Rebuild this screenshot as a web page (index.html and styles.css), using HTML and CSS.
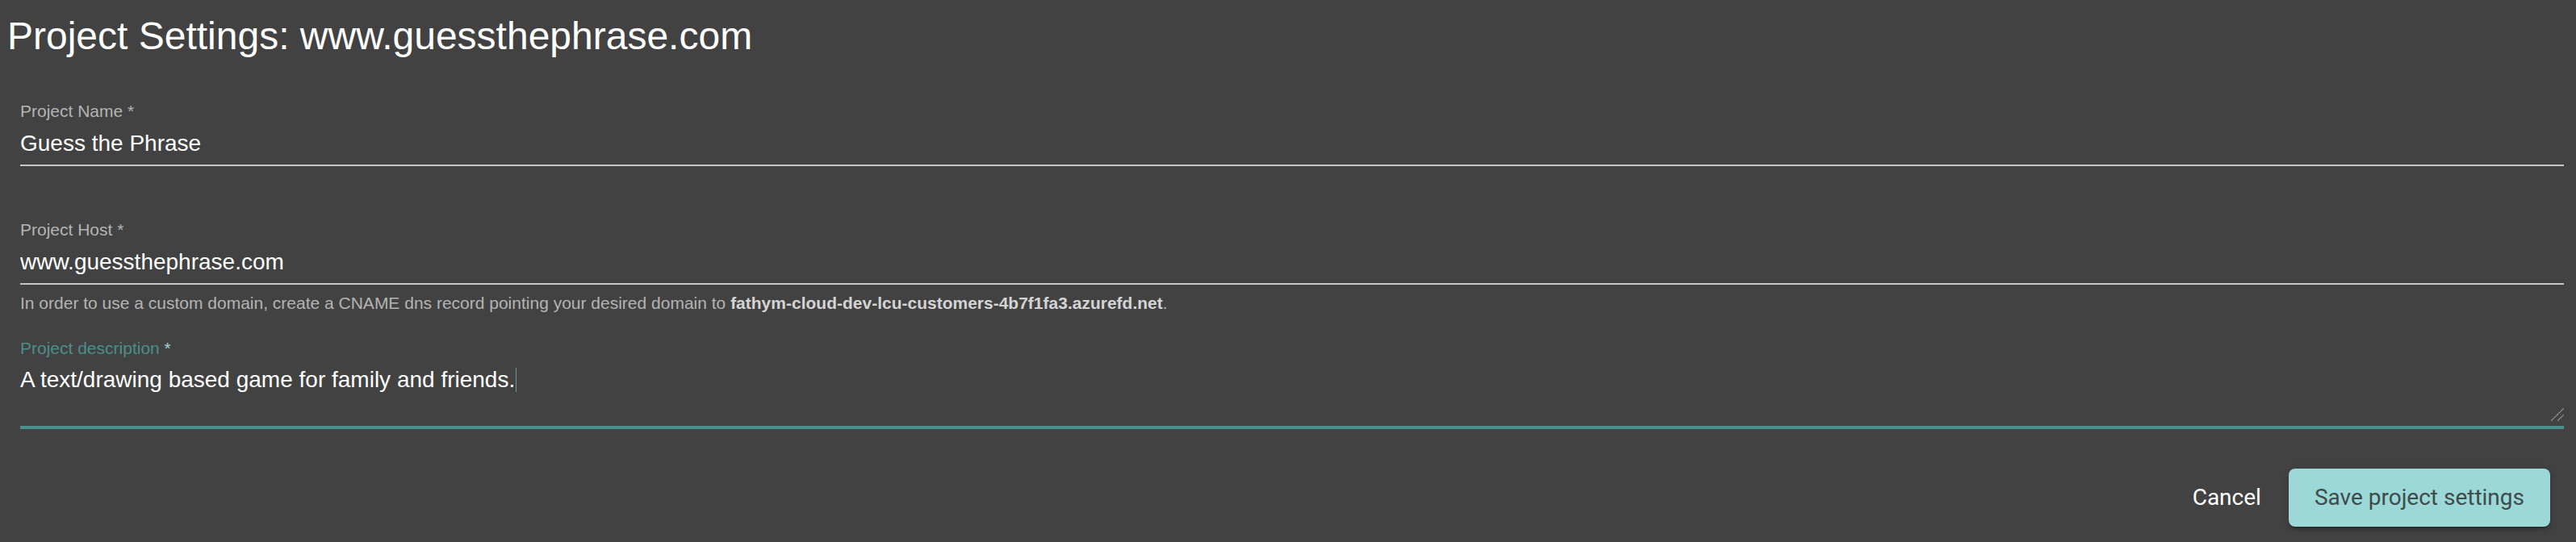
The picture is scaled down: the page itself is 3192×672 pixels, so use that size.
FILE: index.html
```html
<!DOCTYPE html>
<html lang="en">
<head>
<meta charset="utf-8">
<title>Project Settings</title>
<link rel="stylesheet" href="styles.css">
</head>
<body>
<main class="page">
  <h1 class="title">Project Settings: www.guessthephrase.com</h1>
  <form class="form">
    <div class="field">
      <label class="field-label" for="pname">Project Name <span class="req">*</span></label>
      <input class="field-input" id="pname" type="text" value="Guess the Phrase">
      <div class="underline"></div>
      <div class="subscript"></div>
    </div>
    <div class="field">
      <label class="field-label" for="phost">Project Host <span class="req">*</span></label>
      <input class="field-input" id="phost" type="text" value="www.guessthephrase.com">
      <div class="underline"></div>
      <div class="subscript">
        <div class="hint">In order to use a custom domain, create a CNAME dns record pointing your desired domain to <b>fathym-cloud-dev-lcu-customers-4b7f1fa3.azurefd.net</b>.</div>
      </div>
    </div>
    <div class="field field-focused">
      <label class="field-label">Project description <span class="req">*</span></label>
      <div class="textarea" role="textbox" aria-multiline="true">A text/drawing based game for family and friends.<span class="caret"></span>
        <svg class="grip" width="16" height="16" viewBox="0 0 16 16" aria-hidden="true">
          <line x1="0.5" y1="15.5" x2="15.5" y2="0.5"/>
          <line x1="8.5" y1="15.5" x2="15.5" y2="8.5"/>
        </svg>
      </div>
      <div class="underline underline-thick"></div>
    </div>
    <div class="actions">
      <button type="button" class="btn btn-text">Cancel</button>
      <button type="button" class="btn btn-raised">Save project settings</button>
    </div>
  </form>
</main>
</body>
</html>
```

FILE: styles.css
```css
html, body {
  margin: 0;
  padding: 0;
  background: #424242;
}

body {
  font-family: "Liberation Sans", Arial, sans-serif;
  color: #ffffff;
  min-height: 672px;
}

.page {
  display: flex;
  flex-direction: column;
}

.title {
  margin: 17px 0 0 9px;
  font-size: 48px;
  line-height: 56px;
  font-weight: normal;
  color: #ffffff;
}

.form {
  display: flex;
  flex-direction: column;
  margin-top: 53px;
  padding: 0 15px 0 25px;
}

.field {
  display: flex;
  flex-direction: column;
}

.field-label {
  display: block;
  font-size: 21px;
  line-height: 24px;
  height: 24px;
  color: #b4b4b4;
}

.field-focused .field-label {
  color: #4b8f8b;
}

.field-focused .req {
  color: #9fd6d4;
}

.field-input {
  display: block;
  margin: 12px 0 0 0;
  padding: 0;
  border: 0;
  outline: none;
  background: transparent;
  width: 100%;
  height: 32px;
  line-height: 32px;
  font-family: "Liberation Sans", Arial, sans-serif;
  font-size: 28px;
  color: #ffffff;
}

.underline {
  margin-top: 10px;
  height: 2px;
  background: #c6c6c6;
}

.underline-thick {
  margin-top: 5px;
  height: 4px;
  background: #4b8f8b;
}

.subscript {
  height: 67px;
  box-sizing: border-box;
  padding-top: 11px;
}

.hint {
  font-size: 21px;
  line-height: 24px;
  color: #b4b4b4;
}

.hint b {
  font-weight: bold;
  color: #d4d4d4;
}

.textarea {
  position: relative;
  margin-top: 11px;
  height: 68px;
  font-size: 28px;
  line-height: 32px;
  color: #ffffff;
}

.caret {
  display: inline-block;
  width: 1px;
  height: 30px;
  margin-left: 1px;
  vertical-align: -6px;
  background: #5f9b97;
}

.grip {
  position: absolute;
  right: 0;
  bottom: 1px;
  stroke: #bdbdbd;
  stroke-width: 1.2;
  stroke-dasharray: 1.4 0.8;
}

.actions {
  display: flex;
  justify-content: flex-end;
  align-items: center;
  gap: 2px;
  margin-top: 49px;
  margin-right: 17px;
}

.btn {
  font-family: Roboto, "Liberation Sans", Arial, sans-serif;
  font-size: 28px;
  line-height: 72px;
  height: 72px;
  padding: 0 32px;
  border: 0;
  border-radius: 8px;
  cursor: pointer;
  white-space: nowrap;
}

.btn-text {
  background: transparent;
  color: #ffffff;
}

.btn-raised {
  background: #9bd8d7;
  color: #3e4b4b;
  box-shadow: 0 6px 2px -4px rgba(0,0,0,.2), 0 4px 4px 0 rgba(0,0,0,.14), 0 2px 10px 0 rgba(0,0,0,.12);
}
```
